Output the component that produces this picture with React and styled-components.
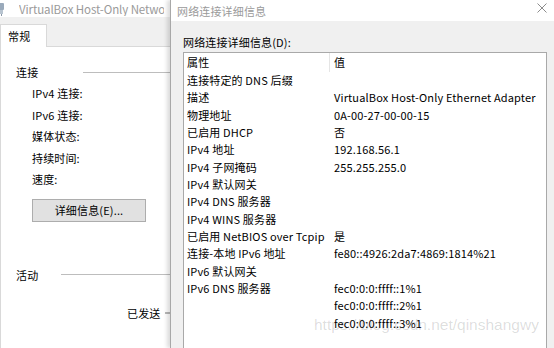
import React from "react";
import styled, { createGlobalStyle } from "styled-components";

const Global = createGlobalStyle`
  html, body { margin: 0; padding: 0; background: #f0f0f0; }
  body { font-family: "Noto Sans CJK SC", "Noto Sans", sans-serif; font-size: 11px; color: #000; letter-spacing: 0.15px; }
  * { box-sizing: border-box; }
`;

const Desktop = styled.div`
  position: relative;
  width: 554px;
  height: 348px;
  display: flex;
  overflow: hidden;
  background: #f0f0f0;
`;

const BackWindow = styled.div`
  width: 170px;
  flex: none;
  display: flex;
  flex-direction: column;
  overflow: hidden;
`;

const TitleBar = styled.div`
  height: ${(p) => p.$h}px;
  flex: none;
  background: #ffffff;
  display: flex;
  align-items: center;
  padding-left: ${(p) => p.$pad}px;
  padding-right: 6px;
  gap: ${(p) => p.$gap}px;
  white-space: nowrap;
  overflow: hidden;
`;

const TitleText = styled.span`
  font-size: ${(p) => p.$size || 11}px;
  letter-spacing: ${(p) => p.$ls || 0.15}px;
  color: #9a9a9a;
  line-height: 14px;
  flex: 1;
  overflow: hidden;
`;

const WinBody = styled.div`
  flex: 1;
  display: flex;
  flex-direction: column;
  padding-top: 7px;
`;

const TabStrip = styled.div`
  display: flex;
  height: 22px;
  flex: none;
`;

const Tab = styled.div`
  width: 47px;
  background: #fff;
  border: 1px solid #d9d9d9;
  border-bottom: none;
  display: flex;
  align-items: center;
  padding-left: 7px;
  font-size: 11px;
  position: relative;
  z-index: 1;
  margin-bottom: -1px;
`;

const TabPanel = styled.div`
  flex: 1;
  background: #fff;
  border-top: 1px solid #d9d9d9;
  border-left: 1px solid #d9d9d9;
  padding: 17px 0 0 15px;
  display: flex;
  flex-direction: column;
`;

const GroupHeader = styled.div`
  display: flex;
  align-items: center;
  height: 16px;
  margin-top: ${(p) => p.$mt || 0}px;
`;

const GroupLabel = styled.span`
  white-space: nowrap;
  line-height: 16px;
`;

const GroupLine = styled.div`
  flex: 1;
  height: 1px;
  background: #bdbdbd;
  margin-left: ${(p) => p.$offset}px;
`;

const InfoRows = styled.div`
  display: flex;
  flex-direction: column;
  padding-left: 16px;
  margin-top: 3px;
`;

const InfoRow = styled.div`
  height: 21.5px;
  line-height: 21.5px;
  white-space: nowrap;
`;

const Button = styled.button`
  margin: 8px 0 0 16px;
  width: 114px;
  height: 23px;
  background: #e1e1e1;
  border: 1px solid #adadad;
  font-family: inherit;
  font-size: 11px;
  letter-spacing: inherit;
  color: #000;
  padding: 0;
`;

const SentRow = styled.div`
  margin-top: 22px;
  padding-left: 111px;
  height: 16px;
  display: flex;
  align-items: center;
  gap: 5px;
  white-space: nowrap;
`;

const Dash = styled.span`
  width: 8px;
  height: 2px;
  background: #b8b8b8;
  flex: none;
`;

const Dialog = styled.div`
  flex: 1;
  display: flex;
  flex-direction: column;
  border-left: 1px solid #a8a8a8;
  box-shadow: -3px 0 4px rgba(0, 0, 0, 0.14);
  background: #f0f0f0;
  position: relative;
  z-index: 2;
`;

const CloseBtn = styled.div`
  width: 12px;
  height: 12px;
  display: flex;
  align-items: center;
  justify-content: center;
  margin-top: -6px;
`;

const DialogBody = styled.div`
  flex: 1;
  padding: 13px 7px 0 12px;
  display: flex;
  flex-direction: column;
`;

const FieldLabel = styled.div`
  line-height: 16px;
  height: 16px;
  margin-bottom: 2px;
`;

const ListBox = styled.div`
  flex: 1;
  background: #fff;
  border: 1px solid #a9a9a9;
  border-bottom: none;
  display: flex;
  flex-direction: column;
`;

const HeaderRow = styled.div`
  display: grid;
  grid-template-columns: 146px 1fr;
  height: 19px;
  align-items: center;
`;

const HeaderCell = styled.div`
  padding-left: ${(p) => p.$pl}px;
  height: 19px;
  line-height: 19px;
  border-right: ${(p) => (p.$sep ? "1px solid #e5e5e5" : "none")};
`;

const Row = styled.div`
  display: grid;
  grid-template-columns: 146px 1fr;
  height: 17.35px;
  line-height: 17.35px;
  white-space: nowrap;
`;

const Cell = styled.div`
  padding-left: ${(p) => p.$pl}px;
  overflow: visible;
`;

const Watermark = styled.div`
  position: absolute;
  left: 314px;
  top: 316px;
  font-family: "Liberation Sans", Arial, sans-serif;
  font-size: 15.5px;
  letter-spacing: 0;
  color: rgba(0, 0, 0, 0.14);
  white-space: nowrap;
  pointer-events: none;
  z-index: 5;
`;

const rows = [
  ["连接特定的 DNS 后缀", ""],
  ["描述", "VirtualBox Host-Only Ethernet Adapter"],
  ["物理地址", "0A-00-27-00-00-15"],
  ["已启用 DHCP", "否"],
  ["IPv4 地址", "192.168.56.1"],
  ["IPv4 子网掩码", "255.255.255.0"],
  ["IPv4 默认网关", ""],
  ["IPv4 DNS 服务器", ""],
  ["IPv4 WINS 服务器", ""],
  ["已启用 NetBIOS over Tcpip", "是"],
  ["连接-本地 IPv6 地址", "fe80::4926:2da7:4869:1814%21"],
  ["IPv6 默认网关", ""],
  ["IPv6 DNS 服务器", "fec0:0:0:ffff::1%1"],
  ["", "fec0:0:0:ffff::2%1"],
  ["", "fec0:0:0:ffff::3%1"],
];

const AppIcon = () => (
  <svg width="6" height="14" viewBox="0 0 6 14" style={{ flex: "none", marginLeft: -1 }}>
    <rect x="0" y="1" width="5" height="7" rx="1" fill="#9aaabb" />
    <rect x="1" y="8" width="3" height="4" fill="#b8c4d0" />
    <line x1="2.5" y1="12" x2="2.5" y2="14" stroke="#8a98a8" strokeWidth="1" />
  </svg>
);

export default function App() {
  return (
    <>
      <Global />
      <Desktop>
        <BackWindow>
          <TitleBar $h={17} $pad={0} $gap={14}>
            <AppIcon />
            <TitleText $size={11.5} $ls={-0.1}>VirtualBox Host-Only Network</TitleText>
          </TitleBar>
          <WinBody>
            <TabStrip>
              <Tab>常规</Tab>
            </TabStrip>
            <TabPanel>
              <GroupHeader>
                <GroupLabel>连接</GroupLabel>
                <GroupLine $offset={45} />
              </GroupHeader>
              <InfoRows>
                <InfoRow>IPv4 连接:</InfoRow>
                <InfoRow>IPv6 连接:</InfoRow>
                <InfoRow>媒体状态:</InfoRow>
                <InfoRow>持续时间:</InfoRow>
                <InfoRow>速度:</InfoRow>
              </InfoRows>
              <Button>详细信息(E)...</Button>
              <GroupHeader $mt={45}>
                <GroupLabel>活动</GroupLabel>
                <GroupLine $offset={23} />
              </GroupHeader>
              <SentRow>
                已发送
                <Dash />
              </SentRow>
            </TabPanel>
          </WinBody>
        </BackWindow>
        <Dialog>
          <TitleBar $h={21} $pad={6} $gap={13}>
            <TitleText>网络连接详细信息</TitleText>
            <CloseBtn>
              <svg width="10" height="10" viewBox="0 0 10 10">
                <path d="M0.5 0.5 L9.5 9.5 M9.5 0.5 L0.5 9.5" stroke="#8c8c8c" strokeWidth="1" fill="none" />
              </svg>
            </CloseBtn>
          </TitleBar>
          <DialogBody>
            <FieldLabel>网络连接详细信息(D):</FieldLabel>
            <ListBox>
              <HeaderRow>
                <HeaderCell $pl={3} $sep>属性</HeaderCell>
                <HeaderCell $pl={4}>值</HeaderCell>
              </HeaderRow>
              {rows.map(([k, v], i) => (
                <Row key={i}>
                  <Cell $pl={3}>{k}</Cell>
                  <Cell $pl={4}>{v}</Cell>
                </Row>
              ))}
            </ListBox>
          </DialogBody>
        </Dialog>
        <Watermark>https://blog.csdn.net/qinshangwy</Watermark>
      </Desktop>
    </>
  );
}
